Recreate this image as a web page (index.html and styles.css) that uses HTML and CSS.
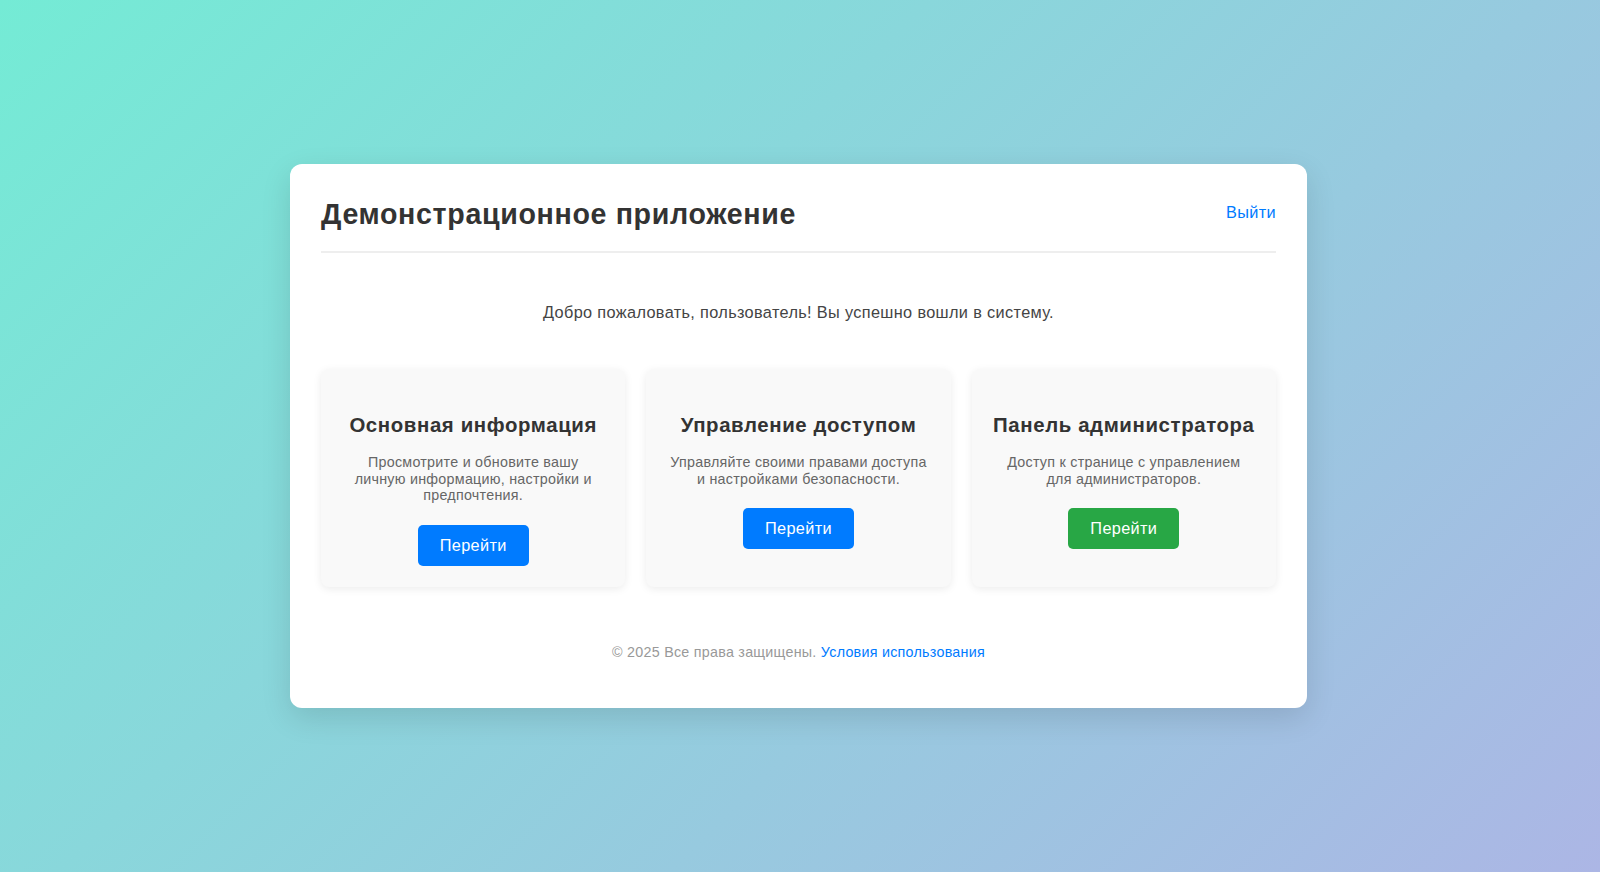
FILE: index.html
```html
<!DOCTYPE html>
<html lang="ru">
<head>
<meta charset="utf-8">
<title>Демонстрационное приложение</title>
<link rel="stylesheet" href="styles.css">
</head>
<body>
<div class="page">
  <div class="panel">
    <header class="header">
      <h1 class="title">Демонстрационное приложение</h1>
      <a class="logout" href="#">Выйти</a>
    </header>
    <p class="welcome">Добро пожаловать, пользователь! Вы успешно вошли в систему.</p>
    <div class="cards">
      <div class="card">
        <h3 class="card-title">Основная информация</h3>
        <p class="card-text">Просмотрите и обновите вашу личную информацию, настройки и предпочтения.</p>
        <a class="btn btn-blue" href="#">Перейти</a>
      </div>
      <div class="card">
        <h3 class="card-title">Управление доступом</h3>
        <p class="card-text">Управляйте своими правами доступа и настройками безопасности.</p>
        <a class="btn btn-blue" href="#">Перейти</a>
      </div>
      <div class="card">
        <h3 class="card-title">Панель администратора</h3>
        <p class="card-text">Доступ к странице с управлением для администраторов.</p>
        <a class="btn btn-green" href="#">Перейти</a>
      </div>
    </div>
    <footer class="footer">© 2025 Все права защищены. <a class="footer-link" href="#">Условия использования</a></footer>
  </div>
</div>
</body>
</html>
```
FILE: styles.css
```css
html, body {
  margin: 0;
  padding: 0;
  height: 100%;
}
body {
  font-family: "Liberation Sans", Arial, Helvetica, sans-serif;
  letter-spacing: 0.022em;
  background: linear-gradient(135deg, #74ebd5 0%, #acb6e5 100%);
  color: #333;
}
.page {
  height: 100%;
  display: flex;
  align-items: center;
  justify-content: center;
}
.panel {
  box-sizing: border-box;
  width: 1017px;
  background: #fff;
  border-radius: 12px;
  padding: 31px;
  box-shadow: 0 10px 30px rgba(0, 0, 0, 0.12);
  margin-left: -3px;
}
.header {
  display: flex;
  justify-content: space-between;
  align-items: flex-start;
  padding: 2px 0 20px;
  border-bottom: 2px solid #eee;
}
.title {
  margin: 0;
  font-size: 28.6px;
  line-height: 34.3px;
  font-weight: bold;
  letter-spacing: 0.023em;
  color: #333;
}
.logout {
  margin-top: 6px;
  font-size: 16.3px;
  color: #007bff;
  text-decoration: none;
}
.welcome {
  margin: 50px 0 0;
  text-align: center;
  font-size: 16.3px;
  color: #444;
}
.cards {
  margin-top: 47px;
  display: grid;
  grid-template-columns: repeat(3, 1fr);
  gap: 21px;
}
.card {
  background: #f9f9f9;
  border-radius: 8px;
  padding: 25px 21px 21px;
  box-shadow: 0 2px 8px rgba(0, 0, 0, 0.08);
  display: flex;
  flex-direction: column;
  align-items: center;
  text-align: center;
}
.card-title {
  margin: 20px 0 16.6px;
  font-size: 20.4px;
  font-weight: bold;
  letter-spacing: 0.03em;
  color: #333;
}
.card-text {
  margin: 0 0 21px;
  font-size: 14.3px;
  line-height: 16.7px;
  letter-spacing: 0.018em;
  color: #666;
}
.btn {
  display: block;
  padding: 11px 22px;
  border-radius: 5px;
  color: #fff;
  font-size: 16.3px;
  text-decoration: none;
}
.btn-blue {
  background: #007bff;
}
.btn-green {
  background: #28a745;
}
.footer {
  margin-top: 57px;
  padding-bottom: 17px;
  text-align: center;
  font-size: 14.3px;
  letter-spacing: 0.018em;
  color: #999;
}
.footer-link {
  color: #007bff;
  text-decoration: none;
}
```
